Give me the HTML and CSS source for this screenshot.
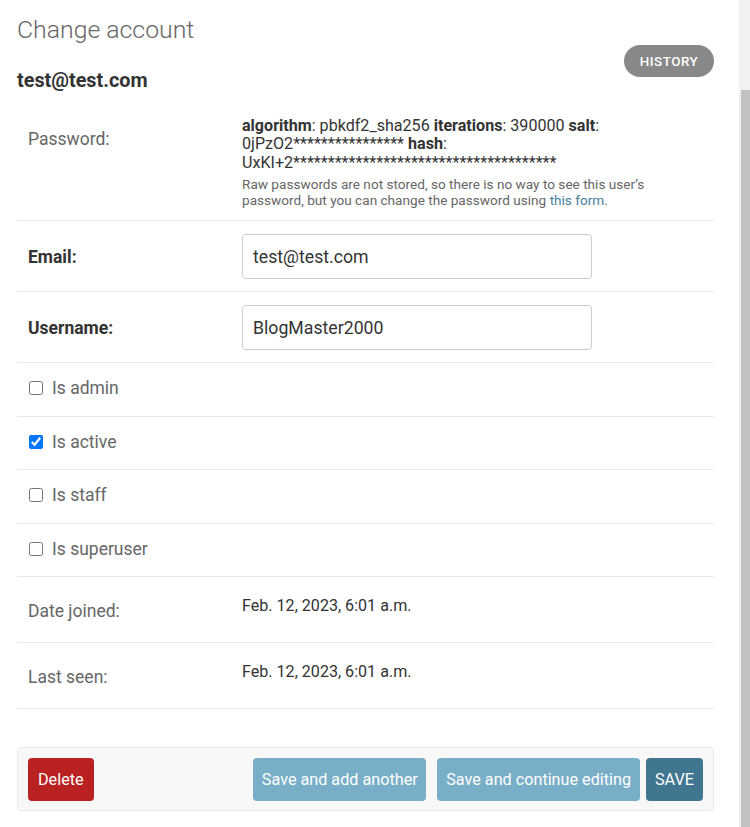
FILE: index.html
```html
<!DOCTYPE html>
<html lang="en">
<head>
<meta charset="utf-8">
<title>Change account</title>
<link rel="stylesheet" href="styles.css">
</head>
<body>
<div class="page">
  <div class="header">
    <div class="titles">
      <h1>Change account</h1>
      <h2>test@test.com</h2>
    </div>
    <a class="history" href="#">History</a>
  </div>

  <form class="form">
    <div class="row row-password">
      <div class="label label-quiet pw-label">Password:</div>
      <div class="value">
        <div class="hash"><strong>algorithm</strong>: pbkdf2_sha256 <strong>iterations</strong>: 390000 <strong>salt</strong>: 0jPzO2**************** <strong>hash</strong>: UxKI+2**************************************</div>
        <div class="help">Raw passwords are not stored, so there is no way to see this user’s password, but you can change the password using <a href="#">this form</a>.</div>
      </div>
    </div>

    <div class="row row-input">
      <label class="label label-required" for="email">Email:</label>
      <input class="text-input" id="email" type="text" value="test@test.com">
    </div>

    <div class="row row-input">
      <label class="label label-required" for="username">Username:</label>
      <input class="text-input" id="username" type="text" value="BlogMaster2000">
    </div>

    <div class="row row-check">
      <input class="check" id="is_admin" type="checkbox">
      <label class="check-label" for="is_admin">Is admin</label>
    </div>

    <div class="row row-check">
      <input class="check" id="is_active" type="checkbox" checked>
      <label class="check-label" for="is_active">Is active</label>
    </div>

    <div class="row row-check">
      <input class="check" id="is_staff" type="checkbox">
      <label class="check-label" for="is_staff">Is staff</label>
    </div>

    <div class="row row-check">
      <input class="check" id="is_superuser" type="checkbox">
      <label class="check-label" for="is_superuser">Is superuser</label>
    </div>

    <div class="row row-readonly">
      <div class="label label-quiet ro-label">Date joined:</div>
      <div class="ro-value">Feb. 12, 2023, 6:01 a.m.</div>
    </div>

    <div class="row row-readonly">
      <div class="label label-quiet ro-label">Last seen:</div>
      <div class="ro-value">Feb. 12, 2023, 6:01 a.m.</div>
    </div>

    <div class="submit-row">
      <a class="btn btn-delete" href="#">Delete</a>
      <div class="submit-actions">
        <button class="btn btn-light btn-add" type="button">Save and add another</button>
        <button class="btn btn-light btn-continue" type="button">Save and continue editing</button>
        <button class="btn btn-save" type="button">SAVE</button>
      </div>
    </div>
  </form>
</div>

<div class="scrollbar"><div class="scrollbar-thumb"></div></div>
</body>
</html>
```

FILE: styles.css
```css
* {
  box-sizing: border-box;
}

html, body {
  margin: 0;
  padding: 0;
  background: #fff;
  overflow: hidden;
}

body {
  font-family: Roboto, "Liberation Sans", sans-serif;
  color: #333;
}

.page {
  width: 739px;
  padding: 0 25px 0 17px;
}

.header {
  display: flex;
  justify-content: space-between;
  align-items: flex-start;
}

h1 {
  margin: 16px 0 0;
  font-size: 24.8px;
  line-height: 28.8px;
  font-weight: 300;
  color: #666;
}

h2 {
  margin: 24.7px 0 0;
  font-size: 19.8px;
  line-height: 24px;
  font-weight: 700;
  color: #333;
}

.history {
  margin-top: 45px;
  width: 90px;
  height: 32px;
  border-radius: 16px;
  background: #888;
  color: #fff;
  text-decoration: none;
  text-transform: uppercase;
  font-size: 13.4px;
  font-weight: 500;
  letter-spacing: 0.5px;
  display: flex;
  align-items: center;
  justify-content: center;
}

.form {
  margin: 9.5px 0 0;
}

.row {
  display: flex;
  border-bottom: 1px solid #e8e8e8;
  padding: 0 0 0 11px;
}

.label {
  width: 214px;
  flex: none;
  font-size: 17.5px;
  line-height: 20px;
}

.label-quiet {
  color: #666;
}

.label-required {
  color: #333;
  font-weight: 700;
}

/* password row */
.row-password {
  padding-top: 14px;
  padding-bottom: 12px;
}

.pw-label {
  padding-top: 12px;
}

.value {
  flex: none;
  width: 455px;
}

.hash {
  font-size: 16.1px;
  line-height: 18.4px;
  color: #333;
}

.hash strong {
  font-weight: 700;
}

.help {
  margin-top: 5px;
  font-size: 13.6px;
  line-height: 15.5px;
  color: #666;
}

.help a {
  color: #447e9b;
  text-decoration: none;
}

/* input rows */
.row-input {
  align-items: center;
  padding-top: 13px;
  padding-bottom: 12px;
  height: 71px;
}

.text-input {
  width: 350px;
  height: 45px;
  margin: 0;
  padding: 0 10px;
  border: 1px solid #ccc;
  border-radius: 4px;
  font-family: Roboto, "Liberation Sans", sans-serif;
  font-size: 17.7px;
  color: #333;
  background: #fff;
  outline: none;
}

/* checkbox rows */
.row-check {
  align-items: center;
  height: 53.5px;
  padding-bottom: 2px;
}

.check {
  width: 14px;
  height: 14px;
  margin: 0 9px 0 1px;
  accent-color: #0075ff;
}

.check-label {
  font-size: 17.5px;
  line-height: 20px;
  color: #666;
}

/* readonly rows */
.row-readonly {
  height: 66px;
  padding-top: 19px;
  align-items: flex-start;
}

.ro-label {
  padding-top: 5px;
}

.ro-value {
  font-size: 16.1px;
  line-height: 20px;
  color: #333;
}

/* submit row */
.submit-row {
  margin-top: 38px;
  display: flex;
  justify-content: space-between;
  align-items: center;
  padding: 10px;
  height: 64px;
  background: #f8f8f8;
  border: 1px solid #eaeaea;
  border-radius: 4px;
}

.submit-actions {
  display: flex;
  align-items: center;
}

.btn {
  height: 43px;
  display: inline-flex;
  align-items: center;
  justify-content: center;
  border: none;
  border-radius: 4px;
  color: #fff;
  font-family: Roboto, "Liberation Sans", sans-serif;
  font-size: 16.2px;
  font-weight: 400;
  text-decoration: none;
  padding: 0 9px;
  margin: 0;
  cursor: pointer;
}

.btn-delete {
  background: #ba2121;
  padding: 0 10px;
}

.btn-light {
  background: #79aec8;
}

.btn-add {
  margin-right: 11px;
  padding: 0 8.5px;
}

.btn-continue {
  margin-right: 6px;
}

.btn-save {
  background: #417690;
}

/* decorative window scrollbar */
.scrollbar {
  position: fixed;
  top: 0;
  right: 0;
  width: 11px;
  height: 100%;
  background: #f1f1f1;
}

.scrollbar-thumb {
  position: absolute;
  top: 90px;
  left: 2px;
  right: 0;
  bottom: 0;
  background: #c1c1c1;
}
```
